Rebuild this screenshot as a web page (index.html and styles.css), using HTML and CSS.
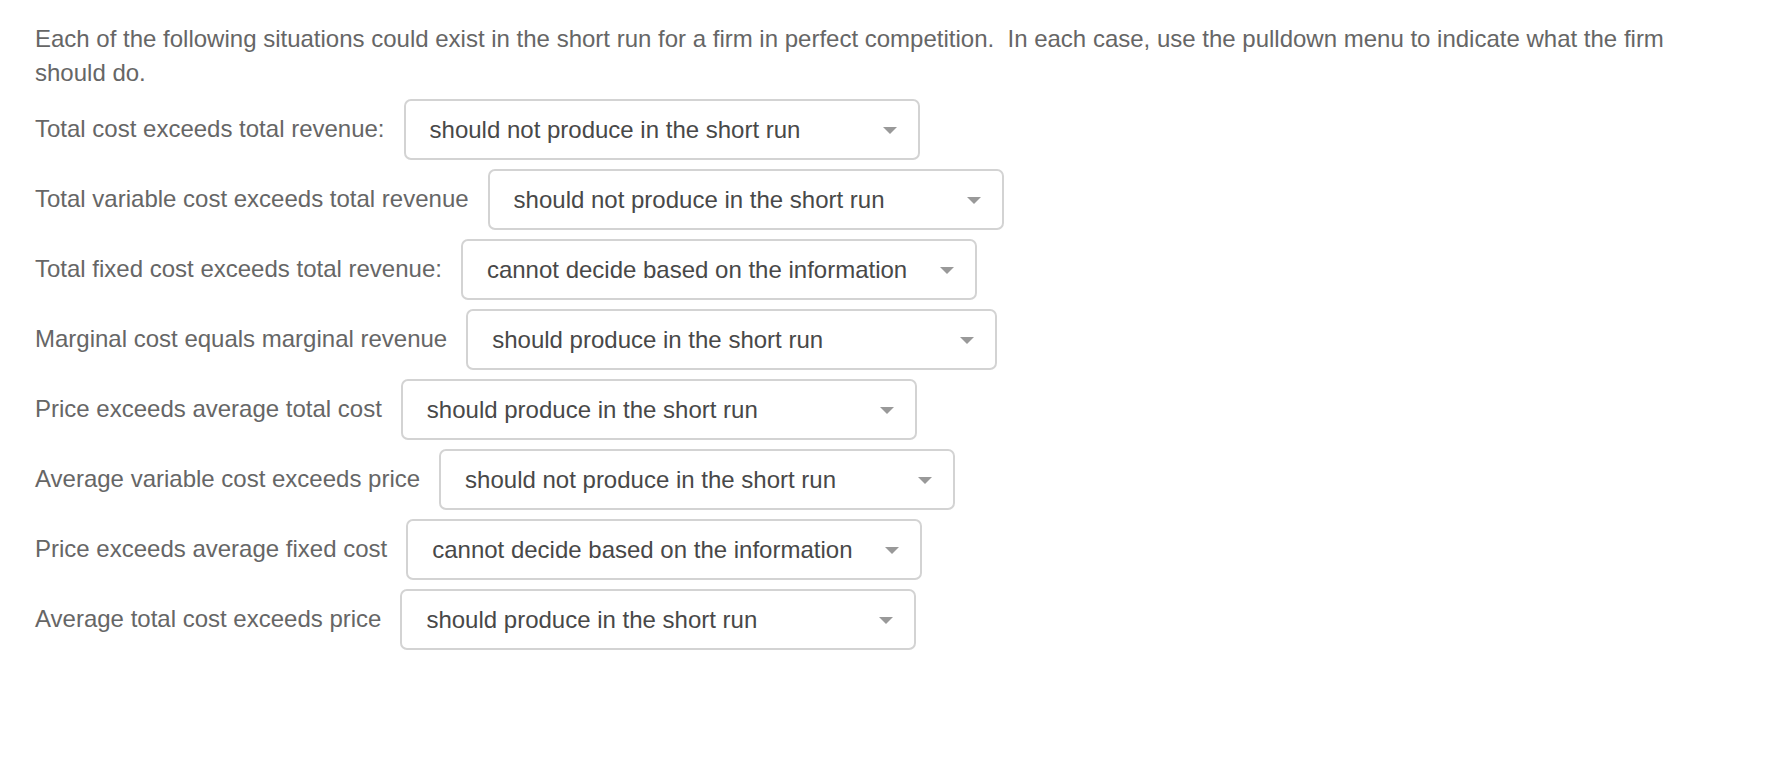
FILE: index.html
```html
<!DOCTYPE html>
<html lang="en">
<head>
    <meta charset="UTF-8">
    <meta name="viewport" content="width=device-width, initial-scale=1.0">
    <title>Perfect Competition - Short Run Decisions</title>
    <link rel="stylesheet" href="styles.css">
</head>
<body>
    <div class="question">
        <p class="intro">Each of the following situations could exist in the short run for a firm in perfect competition.&nbsp; In each case, use the pulldown menu to indicate what the firm should do.</p>

        <div class="form-row">
            <label for="q1">Total cost exceeds total revenue:</label>
            <div class="dropdown">
                <select id="q1">
                    <option>should produce in the short run</option>
                    <option selected>should not produce in the short run</option>
                    <option>cannot decide based on the information</option>
                </select>
                <svg class="caret" width="14" height="7" viewBox="0 0 14 7"><path d="M0 0 L14 0 L7 7 Z"/></svg>
            </div>
        </div>

        <div class="form-row">
            <label for="q2">Total variable cost exceeds total revenue</label>
            <div class="dropdown">
                <select id="q2">
                    <option>should produce in the short run</option>
                    <option selected>should not produce in the short run</option>
                    <option>cannot decide based on the information</option>
                </select>
                <svg class="caret" width="14" height="7" viewBox="0 0 14 7"><path d="M0 0 L14 0 L7 7 Z"/></svg>
            </div>
        </div>

        <div class="form-row">
            <label for="q3">Total fixed cost exceeds total revenue:</label>
            <div class="dropdown">
                <select id="q3">
                    <option>should produce in the short run</option>
                    <option>should not produce in the short run</option>
                    <option selected>cannot decide based on the information</option>
                </select>
                <svg class="caret" width="14" height="7" viewBox="0 0 14 7"><path d="M0 0 L14 0 L7 7 Z"/></svg>
            </div>
        </div>

        <div class="form-row">
            <label for="q4">Marginal cost equals marginal revenue</label>
            <div class="dropdown wide">
                <select id="q4">
                    <option selected>should produce in the short run</option>
                    <option>should not produce in the short run</option>
                    <option>cannot decide based on the information</option>
                </select>
                <svg class="caret" width="14" height="7" viewBox="0 0 14 7"><path d="M0 0 L14 0 L7 7 Z"/></svg>
            </div>
        </div>

        <div class="form-row">
            <label for="q5">Price exceeds average total cost</label>
            <div class="dropdown">
                <select id="q5">
                    <option selected>should produce in the short run</option>
                    <option>should not produce in the short run</option>
                    <option>cannot decide based on the information</option>
                </select>
                <svg class="caret" width="14" height="7" viewBox="0 0 14 7"><path d="M0 0 L14 0 L7 7 Z"/></svg>
            </div>
        </div>

        <div class="form-row">
            <label for="q6">Average variable cost exceeds price</label>
            <div class="dropdown">
                <select id="q6">
                    <option>should produce in the short run</option>
                    <option selected>should not produce in the short run</option>
                    <option>cannot decide based on the information</option>
                </select>
                <svg class="caret" width="14" height="7" viewBox="0 0 14 7"><path d="M0 0 L14 0 L7 7 Z"/></svg>
            </div>
        </div>

        <div class="form-row">
            <label for="q7">Price exceeds average fixed cost</label>
            <div class="dropdown">
                <select id="q7">
                    <option>should produce in the short run</option>
                    <option>should not produce in the short run</option>
                    <option selected>cannot decide based on the information</option>
                </select>
                <svg class="caret" width="14" height="7" viewBox="0 0 14 7"><path d="M0 0 L14 0 L7 7 Z"/></svg>
            </div>
        </div>

        <div class="form-row">
            <label for="q8">Average total cost exceeds price</label>
            <div class="dropdown">
                <select id="q8">
                    <option selected>should produce in the short run</option>
                    <option>should not produce in the short run</option>
                    <option>cannot decide based on the information</option>
                </select>
                <svg class="caret" width="14" height="7" viewBox="0 0 14 7"><path d="M0 0 L14 0 L7 7 Z"/></svg>
            </div>
        </div>
    </div>
</body>
</html>
```

FILE: styles.css
```css
body {
    margin: 0;
    font-family: "Liberation Sans", Arial, Helvetica, sans-serif;
    font-size: 24px;
    line-height: 34px;
    color: #666;
    background-color: #fff;
}
.question {
    padding: 22px 60px 0 35px;
}
.intro {
    margin: 0 0 9px;
}
.form-row {
    display: flex;
    align-items: center;
    gap: 19px;
    margin-bottom: 9px;
}
.form-row label {
    margin-bottom: 2px;
}
.dropdown {
    position: relative;
    width: 516px;
}
.dropdown.wide {
    width: 531px;
}
select {
    appearance: none;
    -webkit-appearance: none;
    display: block;
    width: 100%;
    height: 61px;
    box-sizing: border-box;
    padding: 0 50px 0 24px;
    font-family: inherit;
    font-size: 24px;
    color: #484848;
    background-color: #fff;
    border: 2px solid #d3d3d3;
    border-radius: 7px;
    outline: none;
}
.caret {
    position: absolute;
    right: 23px;
    top: 50%;
    margin-top: -3px;
    fill: #999;
    pointer-events: none;
}
```
